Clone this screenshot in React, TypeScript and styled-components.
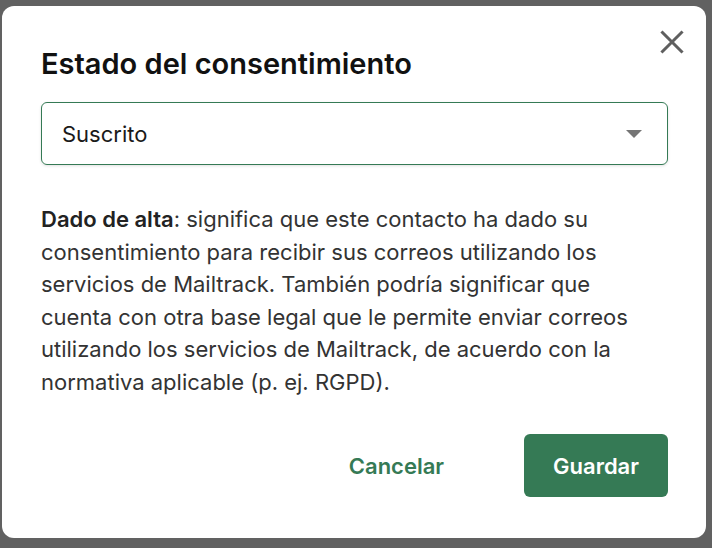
import React from "react";
import styled, { createGlobalStyle } from "styled-components";

const GlobalStyle = createGlobalStyle`
  html, body {
    margin: 0;
    padding: 0;
    background: #616161;
    font-family: Inter, "Noto Sans", sans-serif;
  }
`;

const Backdrop = styled.div`
  width: 712px;
  height: 548px;
  padding: 6px 6px 10px 2px;
  box-sizing: border-box;
`;

const Dialog = styled.div`
  position: relative;
  width: 704px;
  height: 532px;
  box-sizing: border-box;
  background: #ffffff;
  border-radius: 12px;
  padding: 40px 38px 41px 39px;
  display: flex;
  flex-direction: column;
`;

const CloseButton = styled.button`
  position: absolute;
  top: 18px;
  right: 16px;
  width: 36px;
  height: 36px;
  padding: 0;
  border: none;
  background: transparent;
  display: flex;
  align-items: center;
  justify-content: center;
  cursor: pointer;
`;

const Title = styled.h2`
  margin: 0;
  font-size: 29px;
  line-height: 36px;
  font-weight: 600;
  color: #111111;
`;

const Select = styled.div`
  margin-top: 20px;
  height: 63px;
  box-sizing: border-box;
  border: 1px solid #357a55;
  border-radius: 6px;
  padding: 0 25px 0 20px;
  display: flex;
  align-items: center;
  justify-content: space-between;
  box-shadow: 0 1px 3px rgba(0, 0, 0, 0.12);
`;

const SelectValue = styled.span`
  font-size: 22px;
  color: #1a1a1a;
`;

const Caret = styled.span`
  width: 0;
  height: 0;
  border-left: 8px solid transparent;
  border-right: 8px solid transparent;
  border-top: 8px solid #757575;
`;

const Description = styled.p`
  margin: 38px 0 0;
  max-width: 612px;
  font-size: 22px;
  line-height: 32.6px;
  color: #333333;

  strong {
    font-weight: 600;
    color: #222222;
  }
`;

const Actions = styled.div`
  margin-top: auto;
  display: flex;
  justify-content: flex-end;
  align-items: center;
  gap: 51px;
`;

const Button = styled.button<{ $primary?: boolean }>`
  height: 63px;
  padding: 0 29px;
  border: none;
  border-radius: 6px;
  font-family: Inter, "Noto Sans", sans-serif;
  font-size: 22px;
  font-weight: 600;
  cursor: pointer;
  background: ${(p) => (p.$primary ? "#357a55" : "transparent")};
  color: ${(p) => (p.$primary ? "#ffffff" : "#357a55")};
`;

export default function App() {
  return (
    <>
      <GlobalStyle />
      <Backdrop>
        <Dialog>
          <CloseButton aria-label="Cerrar">
            <svg width="24" height="24" viewBox="0 0 24 24">
              <path
                d="M2.5 2.5 L21.5 21.5 M21.5 2.5 L2.5 21.5"
                stroke="#5f5f5f"
                strokeWidth="3"
                strokeLinecap="square"
              />
            </svg>
          </CloseButton>
          <Title>Estado del consentimiento</Title>
          <Select>
            <SelectValue>Suscrito</SelectValue>
            <Caret />
          </Select>
          <Description>
            <strong>Dado de alta</strong>: significa que este contacto ha dado
            su consentimiento para recibir sus correos utilizando los servicios
            de Mailtrack. También podría significar que cuenta con otra base
            legal que le permite enviar correos utilizando los servicios de
            Mailtrack, de acuerdo con la normativa aplicable (p. ej. RGPD).
          </Description>
          <Actions>
            <Button>Cancelar</Button>
            <Button $primary>Guardar</Button>
          </Actions>
        </Dialog>
      </Backdrop>
    </>
  );
}
